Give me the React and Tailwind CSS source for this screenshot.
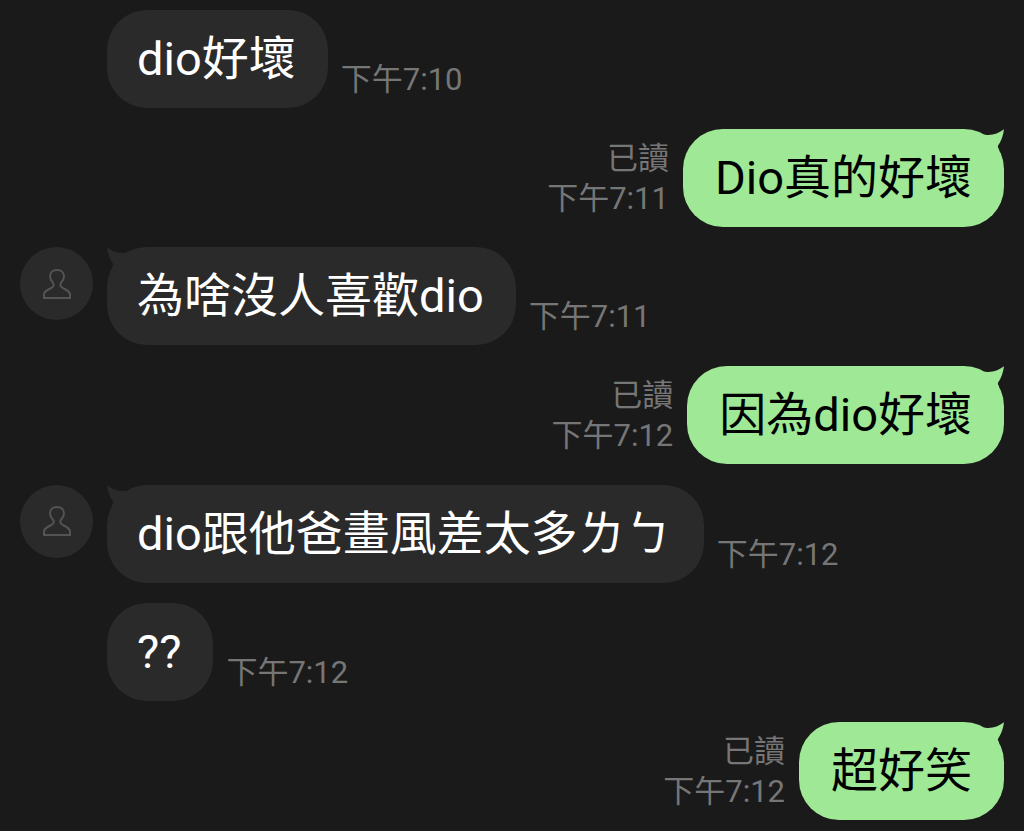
const messages = [
  { id: 1, from: 'them', text: 'dio好壞', time: '下午7:10', first: false },
  { id: 2, from: 'me', text: 'Dio真的好壞', time: '下午7:11', first: true },
  { id: 3, from: 'them', text: '為啥沒人喜歡dio', time: '下午7:11', first: true },
  { id: 4, from: 'me', text: '因為dio好壞', time: '下午7:12', first: true },
  { id: 5, from: 'them', text: 'dio跟他爸畫風差太多ㄌㄅ', time: '下午7:12', first: true },
  { id: 6, from: 'them', text: '??', time: '下午7:12', first: false },
  { id: 7, from: 'me', text: '超好笑', time: '下午7:12', first: true },
];

function Tail({ className }) {
  return (
    <svg className={className} width="32" height="32" viewBox="0 0 32 32" fill="currentColor" aria-hidden="true">
      <path d="M32 0.300C27.500 3.800 22 5.900 16.500 6.100C15.500 6.100 14 6 12.500 5.400L8 14L20 26L27.200 20.800C26.200 19 25.500 17.800 26 16.800C29 12.500 31.300 6.500 32 0.300Z" />
    </svg>
  );
}

function Avatar() {
  return (
    <div className="flex size-[73px] items-center justify-center self-start rounded-full bg-[#2a2a2a] text-[#545454]">
      <svg width="30" height="32" viewBox="0 0 30 32" fill="none" stroke="currentColor" strokeWidth="2" strokeLinejoin="miter" aria-hidden="true">
        <path d="M2 30V26.800C2 24.400 3.200 23.200 5.600 22L9.400 19.900C12 18.400 12.300 16.500 10.700 14.400C9.100 12.400 8 10.800 8 8.400C8 4.500 10.900 2 15 2C19.100 2 22 4.500 22 8.400C22 10.800 20.900 12.400 19.300 14.400C17.700 16.500 18 18.400 20.600 19.900L24.400 22C26.800 23.200 28 24.400 28 26.800V30Z" />
      </svg>
    </div>
  );
}

function Incoming({ message }) {
  return (
    <li className="flex items-end">
      <div className="w-[87px] shrink-0 self-start">{message.first && <Avatar />}</div>
      <div className="relative rounded-[40px] bg-[#2a2a2a] py-[13px] pr-8 pl-[30px] text-white">
        {message.first && <Tail className="absolute top-0 left-0 -scale-x-100 text-[#2a2a2a]" />}
        <p className="relative text-[47px] leading-[72px]">{message.text}</p>
      </div>
      <time className="ml-[13px] pb-2 text-[31px] leading-[40px] text-[#767676]">{message.time}</time>
    </li>
  );
}

function Outgoing({ message }) {
  return (
    <li className="flex items-end justify-end">
      <div className="mr-[14px] pb-2 text-right text-[31px] leading-[40px] text-[#767676]">
        <p>已讀</p>
        <time className="block">{message.time}</time>
      </div>
      <div className="relative rounded-[40px] bg-[#9fe896] px-8 py-[13px] text-black">
        {message.first && <Tail className="absolute top-0 right-0 text-[#9fe896]" />}
        <p className="relative text-[47px] leading-[72px]">{message.text}</p>
      </div>
    </li>
  );
}

export default function App() {
  return (
    <main className="min-h-screen bg-[#1a1a1a] font-[Roboto,'Noto_Sans_CJK_TC',sans-serif]">
      <ol className="flex min-h-screen flex-col justify-between px-5 pt-[10px] pb-[11px] whitespace-nowrap" lang="zh-Hant">
        {messages.map((message) =>
          message.from === 'me' ? (
            <Outgoing key={message.id} message={message} />
          ) : (
            <Incoming key={message.id} message={message} />
          ),
        )}
      </ol>
    </main>
  );
}
